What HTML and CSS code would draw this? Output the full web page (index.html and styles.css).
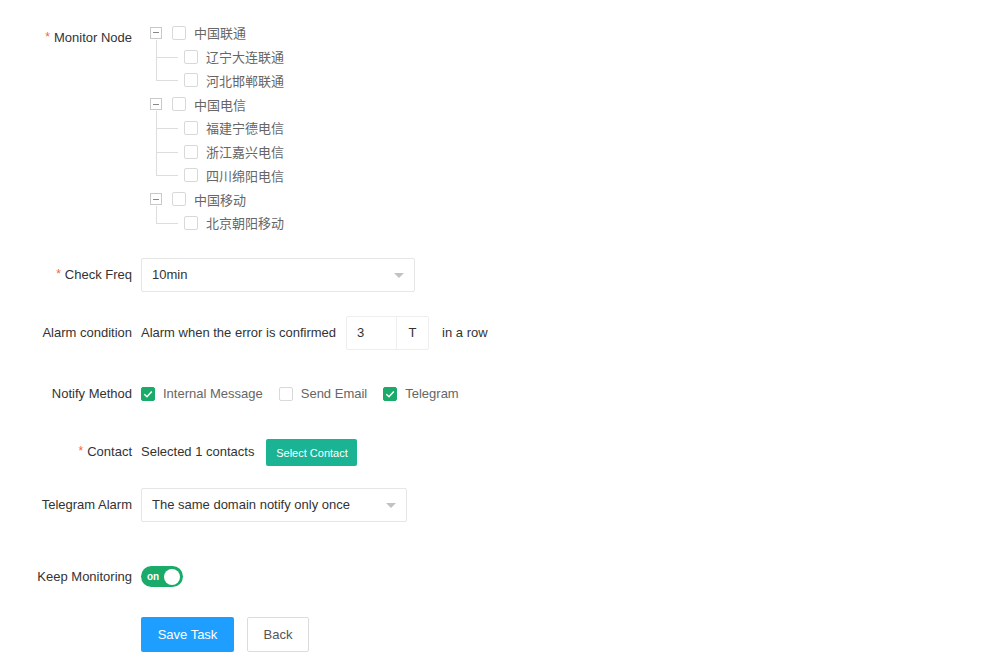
FILE: index.html
```html
<!DOCTYPE html>
<html lang="en">
<head>
<meta charset="utf-8">
<title>Monitor Task</title>
<link rel="stylesheet" href="styles.css">
</head>
<body>
<form class="form">
  <div class="row row-tree">
    <label class="label label-top"><span class="req">*</span>Monitor Node</label>
    <div class="tree">
      <div class="group">
        <div class="node head"><span class="toggle"></span><span class="cb"></span><span class="txt">中国联通</span></div>
        <div class="children">
          <div class="node child"><span class="cb"></span><span class="txt">辽宁大连联通</span></div>
          <div class="node child last"><span class="cb"></span><span class="txt">河北邯郸联通</span></div>
        </div>
      </div>
      <div class="group">
        <div class="node head"><span class="toggle"></span><span class="cb"></span><span class="txt">中国电信</span></div>
        <div class="children">
          <div class="node child"><span class="cb"></span><span class="txt">福建宁德电信</span></div>
          <div class="node child"><span class="cb"></span><span class="txt">浙江嘉兴电信</span></div>
          <div class="node child last"><span class="cb"></span><span class="txt">四川绵阳电信</span></div>
        </div>
      </div>
      <div class="group">
        <div class="node head"><span class="toggle"></span><span class="cb"></span><span class="txt">中国移动</span></div>
        <div class="children">
          <div class="node child last"><span class="cb"></span><span class="txt">北京朝阳移动</span></div>
        </div>
      </div>
    </div>
  </div>

  <div class="row row-freq">
    <label class="label"><span class="req">*</span>Check Freq</label>
    <div class="select select-freq"><span>10min</span><i class="caret"></i></div>
  </div>

  <div class="row row-alarm">
    <label class="label">Alarm condition</label>
    <span class="text">Alarm when the error is confirmed</span>
    <div class="times"><span class="times-val">3</span><span class="times-unit">T</span></div>
    <span class="text">in a row</span>
  </div>

  <div class="row row-notify">
    <label class="label">Notify Method</label>
    <div class="checks">
      <span class="check"><span class="cb on"><svg viewBox="0 0 14 14" width="14" height="14"><path d="M3.3 7.2 L6 9.8 L10.8 4.6" fill="none" stroke="#fff" stroke-width="1.5"/></svg></span><span class="check-txt">Internal Message</span></span>
      <span class="check"><span class="cb"></span><span class="check-txt">Send Email</span></span>
      <span class="check"><span class="cb on"><svg viewBox="0 0 14 14" width="14" height="14"><path d="M3.3 7.2 L6 9.8 L10.8 4.6" fill="none" stroke="#fff" stroke-width="1.5"/></svg></span><span class="check-txt">Telegram</span></span>
    </div>
  </div>

  <div class="row row-contact">
    <label class="label"><span class="req">*</span>Contact</label>
    <span class="text">Selected 1 contacts</span>
    <button type="button" class="btn-teal">Select Contact</button>
  </div>

  <div class="row row-tg">
    <label class="label">Telegram Alarm</label>
    <div class="select select-tg"><span>The same domain notify only once</span><i class="caret"></i></div>
  </div>

  <div class="row row-keep">
    <label class="label">Keep Monitoring</label>
    <span class="switch"><em>on</em><i></i></span>
  </div>

  <div class="row row-actions">
    <span class="label"></span>
    <button type="button" class="btn-primary">Save Task</button>
    <button type="button" class="btn-plain">Back</button>
  </div>
</form>
</body>
</html>
```

FILE: styles.css
```css
* { box-sizing: border-box; }
html, body { margin: 0; padding: 0; background: #fff; }
body {
  font-family: "Liberation Sans", Arial, "Noto Sans CJK SC", sans-serif;
  font-size: 13px;
  color: #333;
}
.form {
  display: flex;
  flex-direction: column;
  padding-top: 21px;
}
.row {
  display: flex;
  align-items: center;
  min-height: 34px;
}
.label {
  width: 141px;
  flex: none;
  padding-right: 9px;
  text-align: right;
  white-space: nowrap;
  color: #333;
}
.label-top { align-self: flex-start; padding-top: 9px; margin-right: 9px; }
.req {
  color: #f5653b;
  margin-right: 4px;
  font-size: 12px;
  vertical-align: 1px;
}

/* tree */
.tree { display: flex; flex-direction: column; }
.node {
  display: flex;
  align-items: center;
  height: 23.75px;
  font-family: "Noto Sans CJK SC", "Liberation Sans", sans-serif;
  color: #666;
  font-size: 13px;
}
.toggle {
  width: 12px;
  height: 12px;
  border: 1px solid #c9c9c9;
  margin-right: 10px;
  position: relative;
  flex: none;
}
.toggle::after {
  content: "";
  position: absolute;
  left: 2px;
  right: 2px;
  top: 4.5px;
  height: 1px;
  background: #888;
}
.cb {
  width: 14px;
  height: 14px;
  border: 1px solid #d9d9d9;
  border-radius: 2px;
  background: #fff;
  flex: none;
  display: inline-flex;
}
.node .cb { margin-right: 8px; }
.children { display: flex; flex-direction: column; }
.child { padding-left: 34px; position: relative; }
.child::before {
  content: "";
  position: absolute;
  left: 6px;
  top: -5px;
  bottom: 0;
  border-left: 1px solid #ddd;
}
.child.last::before { bottom: 50%; }
.child::after {
  content: "";
  position: absolute;
  left: 6px;
  width: 22px;
  top: 50%;
  border-top: 1px solid #ddd;
}

/* selects */
.select {
  height: 34px;
  border: 1px solid #e6e6e6;
  border-radius: 2px;
  display: flex;
  align-items: center;
  justify-content: space-between;
  padding: 0 10px 0 10px;
  color: #333;
}
.select-freq { width: 274px; }
.select-tg { width: 266px; }
.caret {
  width: 0;
  height: 0;
  border-left: 5px solid transparent;
  border-right: 5px solid transparent;
  border-top: 5px solid #c2c2c2;
  margin-top: 1px;
}
.row-freq { margin-top: 23px; }

/* alarm */
.row-alarm { margin-top: 24px; }
.text { color: #333; white-space: nowrap; }
.times {
  display: flex;
  height: 34px;
  margin: 0 13px 0 10px;
  border: 1px solid #eee;
  border-radius: 2px;
}
.times-val {
  width: 50px;
  padding-left: 10px;
  display: flex;
  align-items: center;
  border-right: 1px solid #eee;
}
.times-unit {
  width: 31px;
  display: flex;
  align-items: center;
  justify-content: center;
}

/* notify */
.row-notify { margin-top: 27px; }
.checks { display: flex; align-items: center; }
.check { display: inline-flex; align-items: center; margin-right: 16px; }
.check .cb { margin-right: 8px; }
.cb.on { background: #1aaa6a; border-color: #1aaa6a; }
.cb.on svg { margin: -1px; }
.check-txt { color: #666; }

/* contact */
.row-contact { margin-top: 24px; }
.btn-teal {
  margin-left: 12px;
  width: 91px;
  height: 27px;
  border: none;
  border-radius: 2px;
  background: #1ab394;
  color: #fff;
  font-family: "Liberation Sans", Arial, sans-serif;
  font-size: 11px;
  padding: 0;
  margin-top: 2px;
}

/* telegram */
.row-tg { margin-top: 19px; }

/* keep */
.row-keep { margin-top: 38px; }
.switch {
  width: 42px;
  height: 21px;
  border-radius: 11px;
  background: #1aaa6a;
  display: flex;
  align-items: center;
  justify-content: space-between;
  padding: 0 3px 0 6px;
}
.switch em {
  font-style: normal;
  color: #fff;
  font-size: 10px;
  font-weight: bold;
}
.switch i {
  width: 16px;
  height: 16px;
  border-radius: 50%;
  background: #fff;
}

/* actions */
.row-actions { margin-top: 23px; }
.row-actions .label { padding: 0; }
.btn-primary {
  width: 93px;
  height: 35px;
  border: none;
  border-radius: 2px;
  background: #1e9fff;
  color: #fff;
  font-family: "Liberation Sans", Arial, sans-serif;
  font-size: 13px;
  padding: 0;
}
.btn-plain {
  margin-left: 13px;
  width: 62px;
  height: 35px;
  border: 1px solid #dcdcdc;
  border-radius: 2px;
  background: #fff;
  color: #555;
  font-family: "Liberation Sans", Arial, sans-serif;
  font-size: 13px;
  padding: 0;
}
```
